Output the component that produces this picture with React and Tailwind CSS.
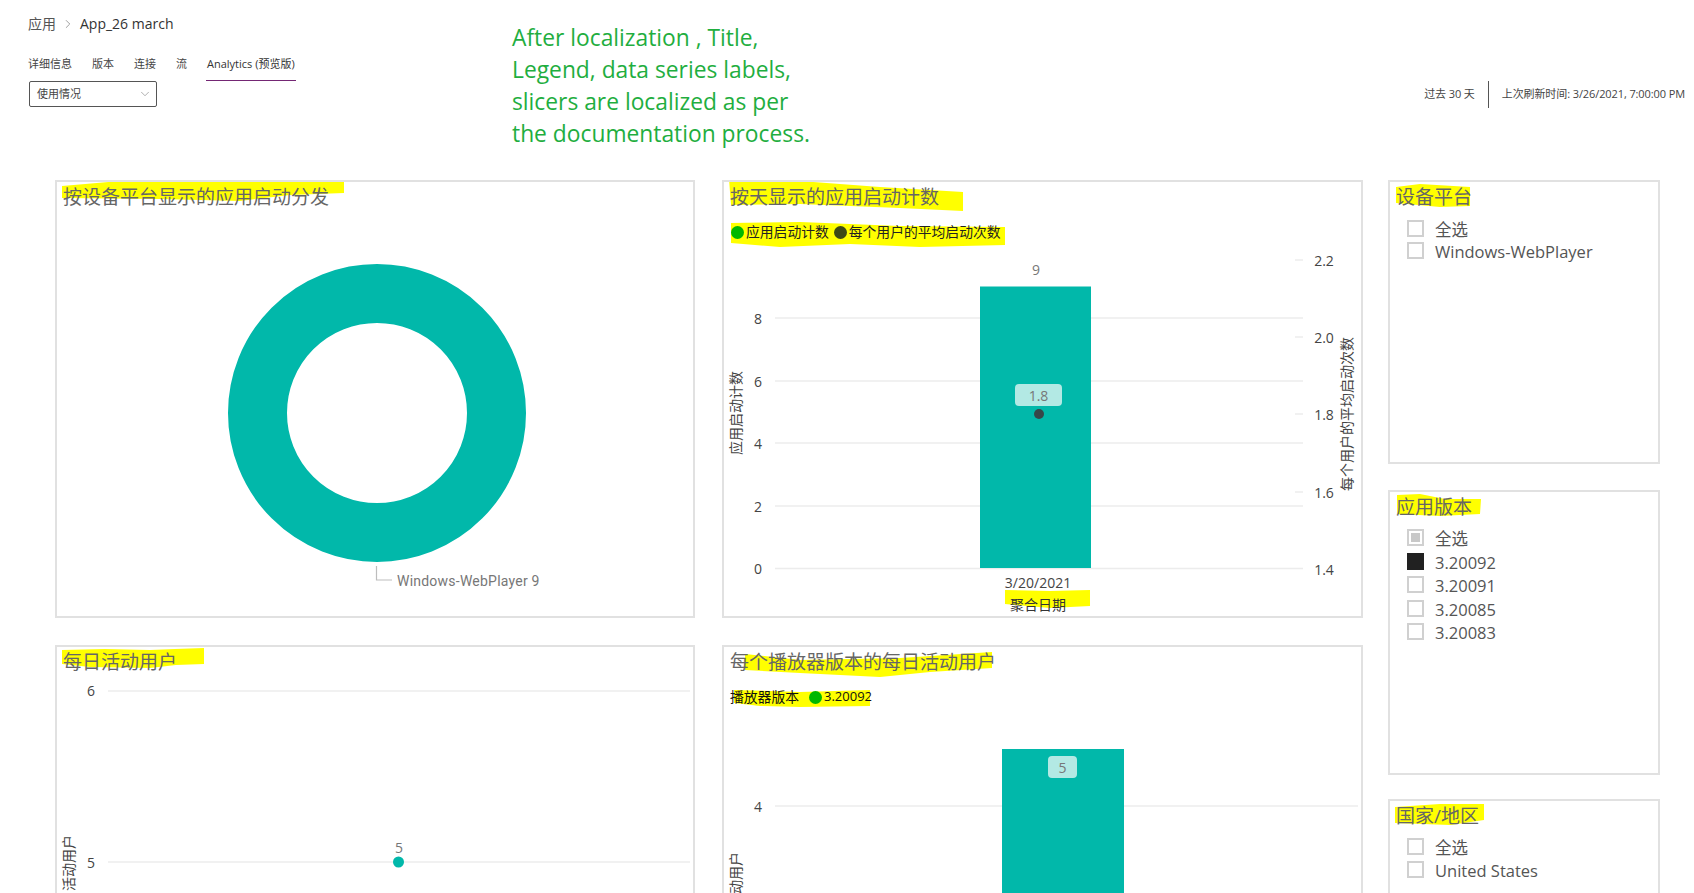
import React from 'react';
import { ChevronDown, ChevronRight } from 'lucide-react';

const TEAL = '#01b8aa';
const YELLOW = '#ffff00';

// Marker scribbles sit behind the card text. viewBox values are page pixels.
const Marker = ({ viewBox, paths }) => (
  <svg className="absolute inset-0 w-full h-full" viewBox={viewBox} aria-hidden="true">
    {paths.map((d) => (
      <path key={d} d={d} fill={YELLOW} />
    ))}
  </svg>
);

const Card = ({ title, marker, className, children }) => (
  <section className={`relative flex flex-col border-2 border-[#e1e1e1] bg-white overflow-hidden ${className}`}>
    {marker}
    <h2 className="relative px-[6px] h-[28px] leading-[30px] text-[19px] font-normal text-[#666] whitespace-nowrap">{title}</h2>
    {children}
  </section>
);

const Label = ({ x, y, className = 'fill-[#444] text-[14px]', rotate, children }) => (
  <text
    x={x}
    y={y}
    textAnchor="middle"
    dominantBaseline="central"
    className={className}
    transform={rotate ? `rotate(${rotate} ${x} ${y})` : undefined}
  >
    {children}
  </text>
);

const GridLine = ({ x1, x2, y }) => <line x1={x1} x2={x2} y1={y} y2={y} stroke="#ececec" strokeWidth="1.5" />;

const Bubble = ({ x, y, w, h, children }) => (
  <g>
    <rect x={x} y={y} width={w} height={h} rx="4" fill="#b3e9e4" />
    <Label x={x + w / 2} y={y + h / 2} className="fill-[#777] text-[14px]">{children}</Label>
  </g>
);

const LegendDot = ({ color }) => <span className={`w-[13px] h-[13px] rounded-full shrink-0 ${color}`} />;

const Slicer = ({ title, marker, className, listClass, rowHeight, items }) => (
  <Card title={title} marker={marker} className={className}>
    <ul className={`relative pl-[17px] ${listClass}`}>
      {items.map((item) => (
        <li key={item.label} className={`flex items-start gap-[11px] ${rowHeight}`}>
          <span
            className={`flex items-center justify-center w-[17px] h-[17px] shrink-0 border-2 ${
              item.state === 'on' ? 'border-[#212121] bg-[#212121]' : 'border-[#d0d0d0] bg-white'
            }`}
          >
            {item.state === 'partial' && <span className="w-[9px] h-[9px] bg-[#c8c8c8]" />}
          </span>
          <span className="text-[16.5px] leading-[20px] text-[#555] whitespace-nowrap">{item.label}</span>
        </li>
      ))}
    </ul>
  </Card>
);

const DonutChart = () => (
  <svg className="relative" width="636" height="405" viewBox="57 210 636 405">
    <circle cx="377" cy="413" r="119.5" fill="none" stroke={TEAL} strokeWidth="59" />
    <path d="M376.5 566V580H392" fill="none" stroke="#bdbdbd" strokeWidth="1.2" />
    <text x="397" y="581" dominantBaseline="central" className="fill-[#777] text-[14px] tracking-[0.23px] font-['Roboto',sans-serif]">
      Windows-WebPlayer 9
    </text>
  </svg>
);

const DailyLaunchChart = () => (
  <svg className="relative" width="637" height="374" viewBox="724 241 637 374">
    {[318, 381, 443, 506, 568.5].map((y) => (
      <GridLine key={y} x1={775} x2={1303} y={y} />
    ))}
    {[260, 337, 414, 492].map((y) => (
      <GridLine key={y} x1={1295} x2={1303} y={y} />
    ))}
    {[[8, 318], [6, 381], [4, 443], [2, 506], [0, 568]].map(([v, y]) => (
      <Label key={v} x={758} y={y}>{v}</Label>
    ))}
    {[['2.2', 260], ['2.0', 337], ['1.8', 414], ['1.6', 492], ['1.4', 569]].map(([v, y]) => (
      <Label key={v} x={1324} y={y}>{v}</Label>
    ))}
    <Label x={735} y={413} rotate={-90} className="fill-[#444] text-[14px]">应用启动计数</Label>
    <Label x={1346} y={414} rotate={-90} className="fill-[#444] text-[14px]">每个用户的平均启动次数</Label>
    <rect x="980" y="286" width="111" height="282" fill={TEAL} />
    <rect x="980" y="286" width="111" height="1" fill="#80dbd4" />
    <Label x={1036} y={269} className="fill-[#777] text-[14px]">9</Label>
    <Bubble x={1015} y={384} w={47} h={22}>1.8</Bubble>
    <circle cx="1039" cy="414" r="5" fill="#374649" />
    <Label x={1038} y={582}>3/20/2021</Label>
    <path d="M1005 590L1050 591L1090 590L1090 606L1050 608L1005 604Z" fill={YELLOW} />
    <Label x={1038} y={604} className="fill-[#333] text-[14px]">聚合日期</Label>
  </svg>
);

const DailyUsersChart = () => (
  <svg className="relative" width="636" height="218" viewBox="57 675 636 218">
    <GridLine x1={108} x2={690} y={691} />
    <GridLine x1={108} x2={690} y={862} />
    <Label x={91} y={690}>6</Label>
    <Label x={91} y={862}>5</Label>
    <Label x={399} y={847} className="fill-[#777] text-[14px]">5</Label>
    <circle cx="398.5" cy="862" r="5.5" fill={TEAL} />
    <Label x={68} y={877} rotate={-90} className="fill-[#444] text-[14px]">每日活动用户</Label>
  </svg>
);

const PlayerVersionChart = () => (
  <svg className="relative" width="637" height="187" viewBox="724 706 637 187">
    <GridLine x1={775} x2={1358} y={806} />
    <Label x={758} y={806}>4</Label>
    <rect x="1002" y="749" width="122" height="144" fill={TEAL} />
    <Bubble x={1048} y={756} w={29} h={22}>5</Bubble>
    <Label x={735} y={894} rotate={-90} className="fill-[#444] text-[14px]">每日活动用户</Label>
  </svg>
);

const tabs = ['详细信息', '版本', '连接', '流'];

const Header = () => (
  <header className="relative h-[180px] pl-[28px] pr-[9px]">
    <nav className="flex items-center pt-[13px] h-[34px] text-[14px] text-[#555]">
      <span>应用</span>
      <ChevronRight className="w-[14px] h-[14px] mx-[5px] text-[#777]" strokeWidth={1.2} />
      <span className="font-medium text-[#333]">App_26 march</span>
    </nav>

    <div className="flex items-start justify-between">
      <div>
        <div className="flex items-start gap-[20px] mt-[22px] text-[11px] leading-[16px] text-[#444]">
          {tabs.map((tab) => (
            <span key={tab}>{tab}</span>
          ))}
          <span className="h-[25px] -ml-[1px] px-[1px] border-b border-[#742774] text-[#333]">Analytics (预览版)</span>
        </div>
        <div className="flex items-center justify-between w-[128px] h-[26px] ml-[1px] pl-[7px] pr-[4px] border border-[#555] rounded-[2px] text-[11px] text-[#444]">
          <span>使用情况</span>
          <ChevronDown className="w-[14px] h-[14px] text-[#777]" strokeWidth={1} />
        </div>
      </div>
      <div className="flex items-center mt-[47px] text-[11px] tracking-[-0.1px] text-[#444]">
        <span>过去 30 天</span>
        <span className="w-px h-[27px] mx-[13px] bg-[#555]" />
        <span>上次刷新时间: 3/26/2021, 7:00:00 PM</span>
      </div>
    </div>

    <p className="absolute left-[512px] top-[22px] text-[22.8px] leading-[32px] text-[#1fae3f] whitespace-nowrap">
      After localization , Title,
      <br />
      Legend, data series labels,
      <br />
      slicers are localized as per
      <br />
      the documentation process.
    </p>
  </header>
);

export default function App() {
  return (
    <div className="h-[893px] overflow-hidden bg-white font-['Open_Sans','Noto_Sans_CJK_SC',sans-serif]">
      <Header />

      <main className="flex pl-[55px]">
        <div className="grid grid-cols-[640px_641px] grid-rows-[438px_437px] gap-x-[27px] gap-y-[27px]">
          <Card
            title="按设备平台显示的应用启动分发"
            className=""
            marker={
              <Marker
                viewBox="57 182 636 434"
                paths={['M62 186L120 181L180 181L230 178L344 177L344 193L290 195L240 201L160 199L62 198Z']}
              />
            }
          >
            <DonutChart />
          </Card>

          <Card
            title="按天显示的应用启动计数"
            className=""
            marker={
              <Marker
                viewBox="724 182 637 434"
                paths={[
                  'M729 179L760 178L880 187L963 192L963 211L900 208L800 204L731 205Z',
                  'M731 223L800 222L900 226L1005 227L1005 245L920 247L850 244L780 247L731 243Z',
                ]}
              />
            }
          >
            <div className="relative flex items-center mt-[11px] h-[20px] pt-[2px] pl-[7px] text-[13.8px] text-[#222] whitespace-nowrap">
              <LegendDot color="bg-[#00b800]" />
              <span className="ml-[2px]">应用启动计数</span>
              <span className="w-[13px] h-[13px] rounded-full ml-[5px] bg-[#3d4a16]" />
              <span className="ml-[2px]">每个用户的平均启动次数</span>
            </div>
            <DailyLaunchChart />
          </Card>

          <Card
            title="每日活动用户"
            className=""
            marker={
              <Marker
                viewBox="57 647 636 433"
                paths={['M62 650L105 649L150 650L175 649L204 648L204 664L176 665L150 668L90 667L62 664Z']}
              />
            }
          >
            <DailyUsersChart />
          </Card>

          <Card
            title="每个播放器版本的每日活动用户"
            className=""
            marker={
              <Marker
                viewBox="724 647 637 433"
                paths={[
                  'M745 654L800 660L900 658L992 652L992 668L930 672L880 677L800 673L745 670Z',
                  'M734 690L770 691L800 692L870 690L870 706L800 707L760 706L734 703Z',
                ]}
              />
            }
          >
            <div className="relative flex items-center mt-[11px] h-[20px] pt-[2px] pl-[6px] text-[13.8px] text-[#111] whitespace-nowrap">
              <span>播放器版本</span>
              <LegendDot color="ml-[10px] bg-[#00b800]" />
              <span className="ml-[2px] text-[13px]">3.20092</span>
            </div>
            <PlayerVersionChart />
          </Card>
        </div>

        <aside className="flex flex-col ml-[25px] w-[272px]">
          <Slicer
            title="设备平台"
            className="h-[284px]"
            listClass="pt-[10px]"
            rowHeight="h-[22px]"
            marker={<Marker viewBox="1390 182 268 280" paths={['M1396 187L1420 184L1470 187L1470 206L1440 207L1396 203Z']} />}
            items={[{ label: '全选' }, { label: 'Windows-WebPlayer' }]}
          />
          <Slicer
            title="应用版本"
            className="h-[285px] mt-[26px]"
            listClass="pt-[9px]"
            rowHeight="h-[23.5px]"
            marker={<Marker viewBox="1390 492 268 281" paths={['M1397 495L1420 494L1445 499L1481 499L1480 514L1440 516L1397 514Z']} />}
            items={[
              { label: '全选', state: 'partial' },
              { label: '3.20092', state: 'on' },
              { label: '3.20091' },
              { label: '3.20085' },
              { label: '3.20083' },
            ]}
          />
          <Slicer
            title="国家/地区"
            className="h-[283px] mt-[24px]"
            listClass="pt-[9px]"
            rowHeight="h-[22.5px]"
            marker={<Marker viewBox="1390 801 268 279" paths={['M1395 807L1440 804L1484 804L1484 820L1450 825L1395 823Z']} />}
            items={[{ label: '全选' }, { label: 'United States' }]}
          />
        </aside>
      </main>
    </div>
  );
}
